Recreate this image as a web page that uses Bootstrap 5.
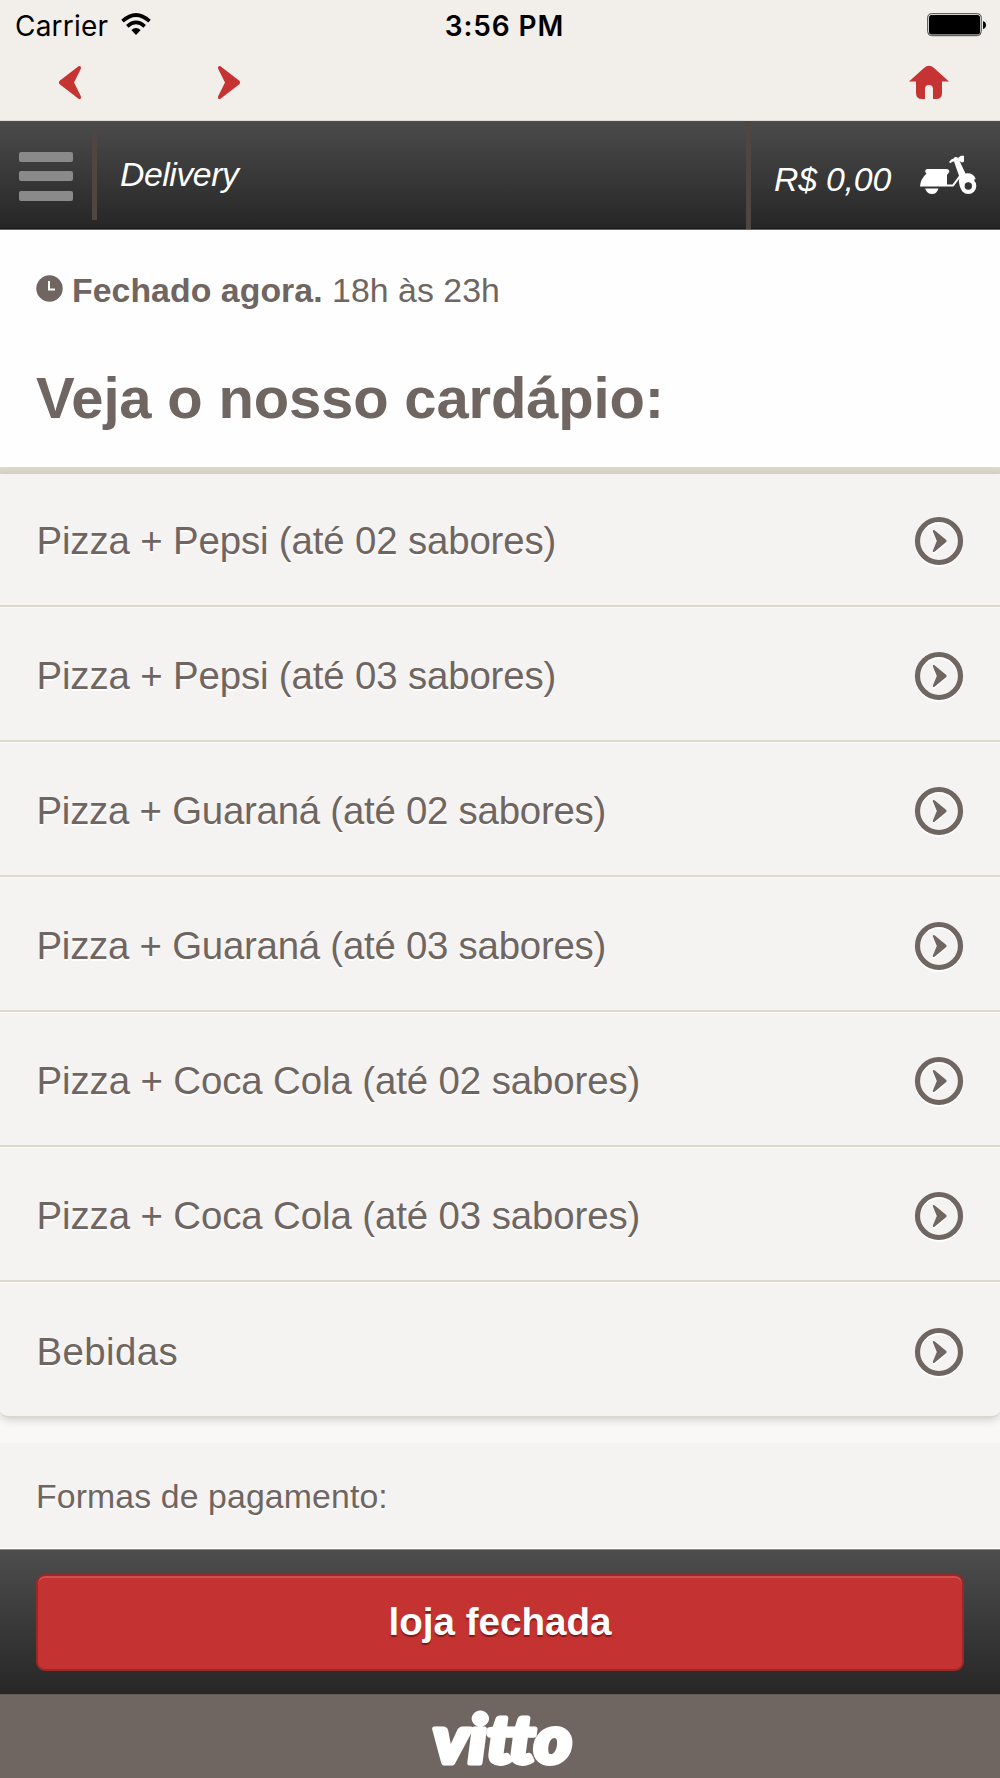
<!DOCTYPE html>
<html lang="pt-BR">
<head>
<meta charset="utf-8">
<meta name="viewport" content="width=device-width, initial-scale=1">
<title>Delivery</title>
<link href="https://cdn.jsdelivr.net/npm/bootstrap@5.3.0/dist/css/bootstrap.min.css" rel="stylesheet">
<style>
  body { font-family: "Liberation Sans", Arial, sans-serif; color: #6f6561; background: #f9f8f7; font-size: 33.8px; line-height: 40px; overflow: hidden; }
  svg { display: block; flex: none; }
  .app { height: 1778px; }
  .app > * { flex: none; }
  .status { height: 50px; padding: 0 14px 0 15px; background: #f2eeea; color: #000; font-family: Inter, sans-serif; font-size: 28px; }
  .status .side { width: 300px; }
  .status .carrier { letter-spacing: .2px; padding-top: 1px; }
  .status .clock { font-weight: 600; letter-spacing: .9px; padding: 1px 0 0 8px; }
  .browser-nav { height: 71px; padding: 15px 50px 0 58px; background: #f2eeea; border-bottom: 1px solid #e2ddd8; color: #c53332; }
  .browser-nav .forward { margin-left: 135px; }
  .app-bar { height: 109px; background: linear-gradient(#4b4b4b, #262626); border-bottom: 1px solid #6b6766; box-shadow: inset 0 -1px #1c1c1c; color: #fff; font-style: italic; }
  .menu-btn { width: 97px; height: 87px; margin-top: 12px; padding: 19px 0 0 19px; gap: 9.4px; border-right: 5px solid #4d4642; }
  .menu-btn i { width: 54px; height: 10px; border-radius: 2px; background: #8a8a8a; }
  .page-name { padding: 33px 0 0 23px; letter-spacing: -.45px; }
  .cart { border-left: 5px solid #4d4642; width: 254px; padding: 8px 0 0 23px; letter-spacing: -.2px; }
  .cart svg { margin: -8px 0 0 29px; }
  .intro { height: 244px; background: #fefefe; border-bottom: 7px solid #ded7cc; padding: 40px 36px 0; }
  .intro p svg { margin: -3px 9px 0 0; }
  .intro p { letter-spacing: .06px; }
  .intro h1 { font-size: 58px; line-height: 70px; margin: 53px 0 0; font-weight: 700; letter-spacing: -.18px; }
  .menu-list { border-radius: 0 0 8px 8px; overflow: hidden; box-shadow: 0 2px 8px rgba(0,0,0,.16); }
  .menu-list .list-group-item { height: 135.2px; padding: 5px 36px 0 36.5px; background: #f5f3f2; color: inherit; font-size: 38.4px; border: 0; border-bottom: 2px solid #ded7cc; text-shadow: 0 2px #fff; box-shadow: inset 0 1px #fbfaf9; letter-spacing: -.14px; }
  .menu-list .list-group-item:first-child { height: 132.5px; box-shadow: none; padding-top: 3px; }
  .menu-list .list-group-item:last-child { height: 135.6px; border-bottom: 2px solid #ded7cc; border-radius: 0 0 8px 8px; letter-spacing: .4px; }
  .menu-list .guarana { letter-spacing: -.24px; }
  .menu-list .coca { letter-spacing: -.1px; }
  .menu-list svg { filter: drop-shadow(0 2px 0 #fff); }
  .payment { margin-top: 25px; height: 105.500px; padding: 33px 36px 0; background: #f5f3f2; text-shadow: 0 2px #fff; border-bottom: 1px solid #fff; letter-spacing: .12px; }
  .order-bar { height: 145px; padding: 24px 36px; background: linear-gradient(#4d4d4d, #272727); border-top: 1px solid #858585; }
  .btn-store, .btn-store:hover { height: 97px; border: 2px solid #992928; border-radius: 9px; background: #c43231; color: #fff; font-size: 38.6px; font-weight: 700; line-height: 40px; text-shadow: 0 2px 1px rgba(80,0,0,.55); box-shadow: inset 0 2px #cc5251; }
  .brand-bar { height: 85px; background: #6f6561; border-top: 1px solid #625955; }
</style>
</head>
<body>
<svg width="0" height="0" class="position-absolute" aria-hidden="true">
  <symbol id="dart" viewBox="0 0 24 36"><path d="M3.500 1.300 22 15.600q2.200 1.900 0 3.800L3.500 33.800Q1 35 1 32.200q0-.7.5-1.700L8 17.500 1.500 4.500Q1 3.500 1 2.500 1.200.2 3.500 1.300Z" fill="currentColor"/></symbol>
  <symbol id="go" viewBox="0 0 50 50"><circle cx="25" cy="25" r="21.500" fill="none" stroke="currentColor" stroke-width="5.200"/><path d="M20.500 14.300 32 23.700q1.500 1.300 0 2.600L20.500 35.700q-2 .9-1.600-1.300L22.800 25 18.900 15.600q-.4-2.200 1.600-1.300Z" fill="currentColor"/></symbol>
</svg>
<main class="app d-flex flex-column">
  <header class="status d-flex align-items-center justify-content-between">
    <div class="side d-flex align-items-center">
      <span class="carrier">Carrier</span>
      <svg class="ms-2" width="40" height="24" viewBox="0 0 40 24" fill="none" stroke="#000" stroke-width="3.600"><path d="M6.500 8.200Q20-4.200 33.500 8.200M11.300 13.300Q20 5.500 28.700 13.300"/><path d="M15.300 17Q20 13 24.700 17L20 22Z" fill="#000" stroke="none"/></svg>
    </div>
    <span class="clock">3:56 PM</span>
    <div class="side d-flex justify-content-end">
      <svg width="59" height="24" viewBox="0 0 59 24"><rect x=".7" y=".7" width="53.500" height="22" rx="4" fill="#f2eeea" stroke="#444" stroke-width="1"/><rect x="2" y="2" width="51" height="19.500" rx="2.500"/><path d="M56 8q3 1 3 4t-3 4Z"/></svg>
    </div>
  </header>
  <nav class="browser-nav d-flex align-items-start">
    <svg width="24" height="36" viewBox="0 0 24 36"><use href="#dart" transform="matrix(-1 0 0 1 24 0)" width="24" height="36"/></svg>
    <svg class="forward" width="24" height="36"><use href="#dart"/></svg>
    <svg class="ms-auto" width="42" height="36" viewBox="0 0 42 36"><path d="M1 16.500 16 3q5-4.500 10 0l15 13.500H34V28q0 6-6 6h-3V24q0-4-4-4t-4 4v10h-3q-6 0-6-6V16.500Z" fill="currentColor"/></svg>
  </nav>
  <div class="app-bar d-flex">
    <div class="menu-btn d-flex flex-column"><i></i><i></i><i></i></div>
    <span class="page-name">Delivery</span>
    <div class="cart d-flex align-items-center ms-auto">
      <span>R$ 0,00</span>
      <svg width="58" height="40" viewBox="0 0 58 40" fill="#fff">
        <path d="M7.500 14h18.800q3 0 3 3l-2.300 3v9.500h5.500l6.500-8.700L34 6.500q-2-.5-3.500 1.800L29 7Q31 3.800 34 3.300l1-1.500 2.500.7 1.700 2.800 6.300 13.200q8-1 10.200 5.500l-1.700.8q1 9-5 11-9.500 1-10-8.600-.3-2 .5-3.700L33.500 31.500H0Q.5 24 6.500 18.500L5.200 17Q5 14 7.500 14Z"/>
        <path d="M38.200 2.700 41 .8h3v6l-2 .6-3.800-1.900ZM5 33.500h13.500q-1.800 5.500-6.500 5.500T5 33.500Z"/>
        <circle cx="48.300" cy="31" r="8"/><circle cx="48.300" cy="31" r="3.700" fill="#343434"/>
      </svg>
    </div>
  </div>
  <section class="intro">
    <p class="d-flex align-items-center m-0"><svg width="27" height="27" viewBox="0 0 27 27"><circle cx="13.500" cy="13.500" r="13.200" fill="currentColor"/><path d="M13 6v8.500h6" fill="none" stroke="#fff" stroke-width="2"/></svg><span><b>Fechado agora.</b> 18h às 23h</span></p>
    <h1>Veja o nosso cardápio:</h1>
  </section>
  <div class="menu-list list-group list-group-flush">
    <a class="list-group-item d-flex align-items-center justify-content-between"><span>Pizza + Pepsi (até 02 sabores)</span><svg width="50" height="50"><use href="#go"/></svg></a>
    <a class="list-group-item d-flex align-items-center justify-content-between"><span>Pizza + Pepsi (até 03 sabores)</span><svg width="50" height="50"><use href="#go"/></svg></a>
    <a class="list-group-item guarana d-flex align-items-center justify-content-between"><span>Pizza + Guaraná (até 02 sabores)</span><svg width="50" height="50"><use href="#go"/></svg></a>
    <a class="list-group-item guarana d-flex align-items-center justify-content-between"><span>Pizza + Guaraná (até 03 sabores)</span><svg width="50" height="50"><use href="#go"/></svg></a>
    <a class="list-group-item coca d-flex align-items-center justify-content-between"><span>Pizza + Coca Cola (até 02 sabores)</span><svg width="50" height="50"><use href="#go"/></svg></a>
    <a class="list-group-item coca d-flex align-items-center justify-content-between"><span>Pizza + Coca Cola (até 03 sabores)</span><svg width="50" height="50"><use href="#go"/></svg></a>
    <a class="list-group-item d-flex align-items-center justify-content-between"><span>Bebidas</span><svg width="50" height="50"><use href="#go"/></svg></a>
  </div>
  <section class="payment">Formas de pagamento:</section>
  <div class="order-bar"><button class="btn btn-store w-100" type="button">loja fechada</button></div>
  <footer class="brand-bar d-flex justify-content-center">
    <svg width="160" height="84" viewBox="0 0 160 84"><text x="13" y="67.500" textLength="139" lengthAdjust="spacingAndGlyphs" font-family="Lato, sans-serif" font-weight="900" font-style="italic" font-size="66" fill="#fff" stroke="#fff" stroke-width="5" stroke-linejoin="round">vitto</text></svg>
  </footer>
</main>
<script src="https://cdn.jsdelivr.net/npm/bootstrap@5.3.0/dist/js/bootstrap.bundle.min.js"></script>
</body>
</html>
